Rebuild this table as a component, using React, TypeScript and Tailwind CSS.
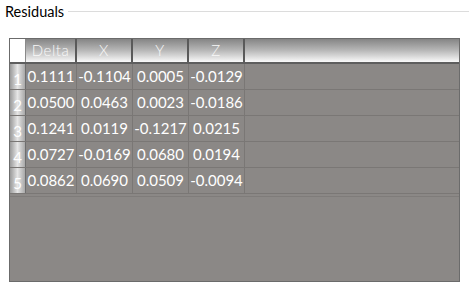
const rows = [
  ['0.1111', '-0.1104', '0.0005', '-0.0129'],
  ['0.0500', '0.0463', '0.0023', '-0.0186'],
  ['0.1241', '0.0119', '-0.1217', '0.0215'],
  ['0.0727', '-0.0169', '0.0680', '0.0194'],
  ['0.0862', '0.0690', '0.0509', '-0.0094'],
]

const headers = ['Delta', 'X', 'Y', 'Z']
const widths = ['w-[51px]', 'w-[56px]', 'w-[56px]', 'w-[56px]']

export default function App() {
  return (
    <div className="w-[469px] h-[288px] bg-white relative overflow-hidden" style={{ fontFamily: 'Lato, "Open Sans", sans-serif' }}>
      {/* group box frame */}
      <div className="flex items-center h-[24px] pl-[5px]">
        <span className="text-[14.5px] text-black leading-none">Residuals</span>
        <div className="flex-1 h-px bg-[#dcdcdc] ml-[4px] -mt-[1px]" />
      </div>

      <div className="ml-[9px] mt-[14px] w-[451px] h-[244px] bg-[#8b8886] border border-[#6b6b6b] flex flex-col">
        {/* header row */}
        <div className="flex h-[25px] border-b-2 border-[#5e5e5e]">
          <div className="w-[16px] shrink-0 bg-white border-r border-[#8a8a8a]" />
          {headers.map((h, i) => (
            <div
              key={h}
              className={`${widths[i]} shrink-0 border-r-2 border-[#5a5a5a] bg-gradient-to-b from-[#858585] via-[#b8b8b8] to-[#fafafa] flex items-center justify-center text-[15px] tracking-[0.5px] font-light text-[#f8f8f8]`}
            >
              {h}
            </div>
          ))}
          <div className="flex-1 bg-gradient-to-b from-[#858585] via-[#b8b8b8] to-[#fafafa]" />
        </div>

        {rows.map((r, ri) => (
          <div key={ri} className="flex h-[26px] border-b border-[#7a7775]">
            <div className="w-[16px] shrink-0 bg-gradient-to-r from-[#9a9a9a] via-[#e6e6e6] to-[#a8a8a8] border-r border-[#6e6e6e] flex items-end justify-center pb-[2px] text-[15px] text-white leading-none">
              {ri + 1}
            </div>
            {r.map((v, ci) => (
              <div
                key={ci}
                className={`${widths[ci]} shrink-0 whitespace-nowrap border-r border-[#7a7775] flex items-center justify-center text-[15px] text-white`}
              >
                {v}
              </div>
            ))}
            <div className="flex-1" />
          </div>
        ))}
        <div className="flex-1 mt-[2px] border-t border-[#7f7c7a]" />
      </div>
    </div>
  )
}
